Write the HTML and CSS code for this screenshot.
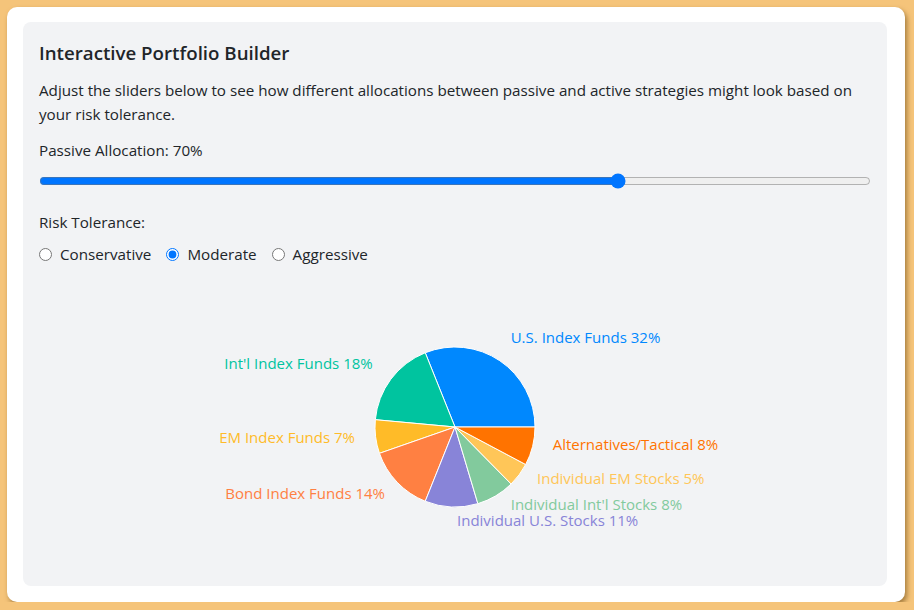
FILE: index.html
```html
<!DOCTYPE html>
<html lang="en">
<head>
<meta charset="utf-8">
<title>Interactive Portfolio Builder</title>
<link rel="stylesheet" href="styles.css">
</head>
<body>
<div class="card">
  <div class="panel">
    <h3 class="title">Interactive Portfolio Builder</h3>
    <p class="intro">Adjust the sliders below to see how different allocations between passive and active strategies might look based on your risk tolerance.</p>
    <div class="field">
      <label class="field-label" for="passive">Passive Allocation: 70%</label>
      <input class="slider" id="passive" type="range" min="0" max="100" value="70">
    </div>
    <div class="field field-risk">
      <div class="field-label">Risk Tolerance:</div>
      <div class="radios">
        <label class="radio"><input type="radio" name="risk" value="conservative"><span>Conservative</span></label>
        <label class="radio"><input type="radio" name="risk" value="moderate" checked><span>Moderate</span></label>
        <label class="radio"><input type="radio" name="risk" value="aggressive"><span>Aggressive</span></label>
      </div>
    </div>
    <div class="chart">
      <svg class="pie" width="832" height="294" viewBox="0 0 832 294">
        <g stroke="#fff" stroke-width="1">
          <path fill="#0088FE" d="M416 150 L496 150 A80 80 0 0 0 386.24 75.74 Z"/>
          <path fill="#00C49F" d="M416 150 L386.24 75.74 A80 80 0 0 0 336.33 142.69 Z"/>
          <path fill="#FFBB28" d="M416 150 L336.33 142.69 A80 80 0 0 0 340.46 176.34 Z"/>
          <path fill="#FF8042" d="M416 150 L340.46 176.34 A80 80 0 0 0 386.24 224.26 Z"/>
          <path fill="#8884d8" d="M416 150 L386.24 224.26 A80 80 0 0 0 438.86 226.66 Z"/>
          <path fill="#82ca9d" d="M416 150 L438.86 226.66 A80 80 0 0 0 472.13 207.01 Z"/>
          <path fill="#ffc658" d="M416 150 L472.13 207.01 A80 80 0 0 0 486.66 187.51 Z"/>
          <path fill="#ff7300" d="M416 150 L486.66 187.51 A80 80 0 0 0 496 150 Z"/>
        </g>
        <g class="labels">
          <text x="471.7" y="66" fill="#0088FE">U.S. Index Funds 32%</text>
          <text x="333.7" y="91.7" fill="#00C49F" text-anchor="end">Int'l Index Funds 18%</text>
          <text x="316" y="165.7" fill="#FFBB28" text-anchor="end">EM Index Funds 7%</text>
          <text x="346" y="222" fill="#FF8042" text-anchor="end">Bond Index Funds 14%</text>
          <text x="513.7" y="173" fill="#ff7300">Alternatives/Tactical 8%</text>
          <text x="498" y="207" fill="#ffc658">Individual EM Stocks 5%</text>
          <text x="471.7" y="233" fill="#82ca9d">Individual Int'l Stocks 8%</text>
          <text x="418" y="249" fill="#8884d8">Individual U.S. Stocks 11%</text>
        </g>
      </svg>
    </div>
  </div>
</div>
</body>
</html>
```
FILE: styles.css
```css
html, body {
  margin: 0;
  padding: 0;
}
body {
  background: #f5c47a;
  font-family: "Open Sans", "Noto Sans", sans-serif;
  color: #212529;
  font-size: 15.2px;
  line-height: 24px;
}
.card {
  margin: 7px 9px 0 7px;
  height: 595px;
  box-sizing: border-box;
  padding: 15px 18px 16px 16px;
  background: #fff;
  border-radius: 10px;
  box-shadow: 2px 3px 5px rgba(110, 75, 20, 0.6);
}
.panel {
  box-sizing: border-box;
  height: 564px;
  background: #f2f3f5;
  border-radius: 8px;
  padding: 16px 16px 0 16px;
}
.title {
  margin: 0;
  font-size: 18.7px;
  line-height: 30px;
  font-weight: 600;
}
.intro {
  margin: 10px 0 12px;
}
.field {
  margin: 0 0 21px;
}
.field-risk {
  margin-bottom: 11px;
}
.field-label {
  display: block;
}
.slider {
  display: block;
  width: 100%;
  margin: 11px 0 0;
  box-sizing: border-box;
}
.radios {
  display: flex;
  align-items: center;
  margin-top: 8px;
}
.radio {
  display: flex;
  align-items: center;
  margin-right: 15px;
}
.radio input {
  margin: 0 8px 0 0;
}
.chart {
  display: flex;
  justify-content: center;
  margin-top: 4px;
}
.pie {
  display: block;
}
.labels text {
  font-family: "Open Sans", "Noto Sans", sans-serif;
  font-size: 15px;
}
```
